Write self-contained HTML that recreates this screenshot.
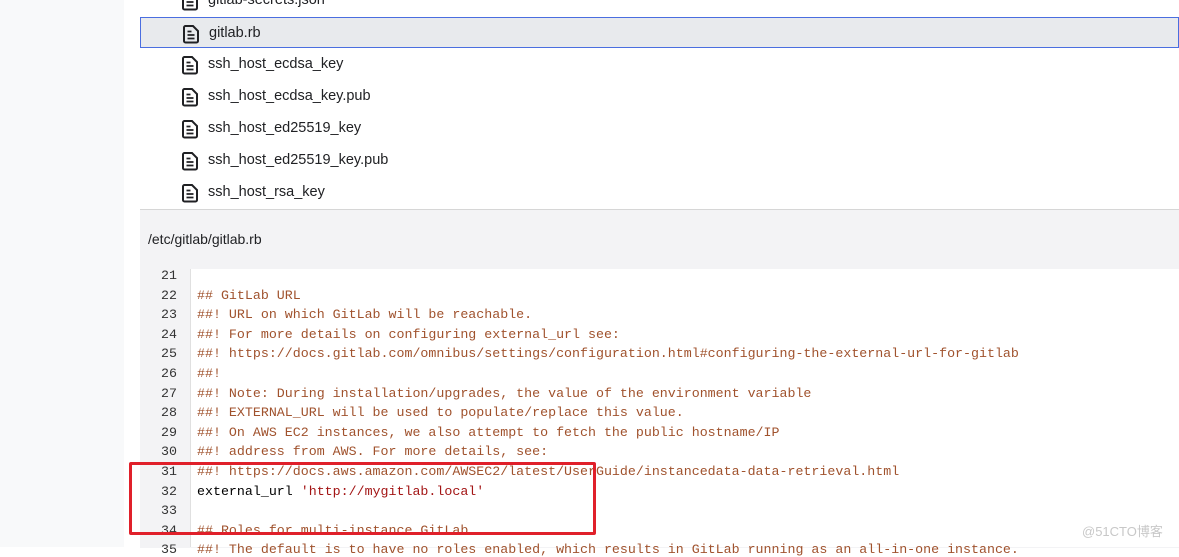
<!DOCTYPE html>
<html><head><meta charset="utf-8"><style>
body{margin:0;width:1179px;height:547px;overflow:hidden;background:#fff;font-family:"Liberation Sans",sans-serif;position:relative}
.side{position:absolute;left:0;top:0;width:124px;height:547px;background:#f8f9fa}
.row{position:absolute;left:140px;width:1039px;height:30px;font-size:14.5px;color:#202124}
.row span{position:absolute;left:68px;top:7px}
.row svg{position:absolute;left:41px;top:6px}
.sel{background:#e8eaed;border:1px solid #4a6ee0;box-sizing:border-box}
.hdr{position:absolute;left:140px;top:209px;width:1039px;height:338px;background:#f3f3f5;border-top:1px solid #d6d6d6}
.path{position:absolute;left:148px;top:231px;font-size:14px;color:#202124}
.code{position:absolute;left:190px;top:269px;width:989px;height:278px;background:#fff;border-left:1px solid #e0e0e0}
.ln{position:absolute;left:140px;width:37px;text-align:right;font:13.3px "Liberation Mono",monospace;color:#333}
.cl{position:absolute;left:197px;font:13.3px "Liberation Mono",monospace;white-space:pre;color:#a0522d}
.k{color:#000}.s{color:#a31515}
.box{position:absolute;left:129px;top:462px;width:461px;height:67px;border:3px solid #e0202a;border-radius:2px}
.wm{position:absolute;left:1082px;top:521px;font:13px "Liberation Sans","Noto Sans CJK SC",sans-serif;color:#c8c8c8}
</style></head><body>
<div class="side"></div>
<svg width="0" height="0" style="position:absolute"><defs><symbol id="f" viewBox="0 0 18 20"><path d="M3 2h8l5 5v10a1.5 1.5 0 0 1-1.5 1.5h-11A1.5 1.5 0 0 1 2 17V3.5A1.5 1.5 0 0 1 3.5 2z" fill="none" stroke="#202124" stroke-width="2"/><path d="M5.5 11h7M5.5 14.5h7M5.5 7.5h4" stroke="#202124" stroke-width="1.8"/></symbol></defs></svg>
<div class="row" style="top:-15px"><svg width="18" height="20"><use href="#f"/></svg><span>gitlab-secrets.json</span></div>
<div class="row sel" style="top:17px;height:31px"><svg width="18" height="20"><use href="#f"/></svg><span>gitlab.rb</span></div>
<div class="row" style="top:49px"><svg width="18" height="20"><use href="#f"/></svg><span>ssh_host_ecdsa_key</span></div>
<div class="row" style="top:81px"><svg width="18" height="20"><use href="#f"/></svg><span>ssh_host_ecdsa_key.pub</span></div>
<div class="row" style="top:113px"><svg width="18" height="20"><use href="#f"/></svg><span>ssh_host_ed25519_key</span></div>
<div class="row" style="top:145px"><svg width="18" height="20"><use href="#f"/></svg><span>ssh_host_ed25519_key.pub</span></div>
<div class="row" style="top:177px"><svg width="18" height="20"><use href="#f"/></svg><span>ssh_host_rsa_key</span></div>
<div class="hdr"></div>
<div class="path">/etc/gitlab/gitlab.rb</div>
<div class="code"></div>
<div class="ln" style="top:268px">21</div>
<div class="ln" style="top:288px">22</div><div class="cl" style="top:288px">## GitLab URL</div>
<div class="ln" style="top:307px">23</div><div class="cl" style="top:307px">##! URL on which GitLab will be reachable.</div>
<div class="ln" style="top:327px">24</div><div class="cl" style="top:327px">##! For more details on configuring external_url see:</div>
<div class="ln" style="top:346px">25</div><div class="cl" style="top:346px">##! https://docs.gitlab.com/omnibus/settings/configuration.html#configuring-the-external-url-for-gitlab</div>
<div class="ln" style="top:366px">26</div><div class="cl" style="top:366px">##!</div>
<div class="ln" style="top:386px">27</div><div class="cl" style="top:386px">##! Note: During installation/upgrades, the value of the environment variable</div>
<div class="ln" style="top:405px">28</div><div class="cl" style="top:405px">##! EXTERNAL_URL will be used to populate/replace this value.</div>
<div class="ln" style="top:425px">29</div><div class="cl" style="top:425px">##! On AWS EC2 instances, we also attempt to fetch the public hostname/IP</div>
<div class="ln" style="top:444px">30</div><div class="cl" style="top:444px">##! address from AWS. For more details, see:</div>
<div class="ln" style="top:464px">31</div><div class="cl" style="top:464px">##! https://docs.aws.amazon.com/AWSEC2/latest/UserGuide/instancedata-data-retrieval.html</div>
<div class="ln" style="top:484px">32</div><div class="cl" style="top:484px"><span class="k">external_url </span><span class="s">'http://mygitlab.local'</span></div>
<div class="ln" style="top:503px">33</div>
<div class="ln" style="top:523px">34</div><div class="cl" style="top:523px">## Roles for multi-instance GitLab</div>
<div class="ln" style="top:542px">35</div><div class="cl" style="top:542px">##! The default is to have no roles enabled, which results in GitLab running as an all-in-one instance.</div>
<div class="box"></div>
<div class="wm">@51CTO博客</div>
</body></html>
